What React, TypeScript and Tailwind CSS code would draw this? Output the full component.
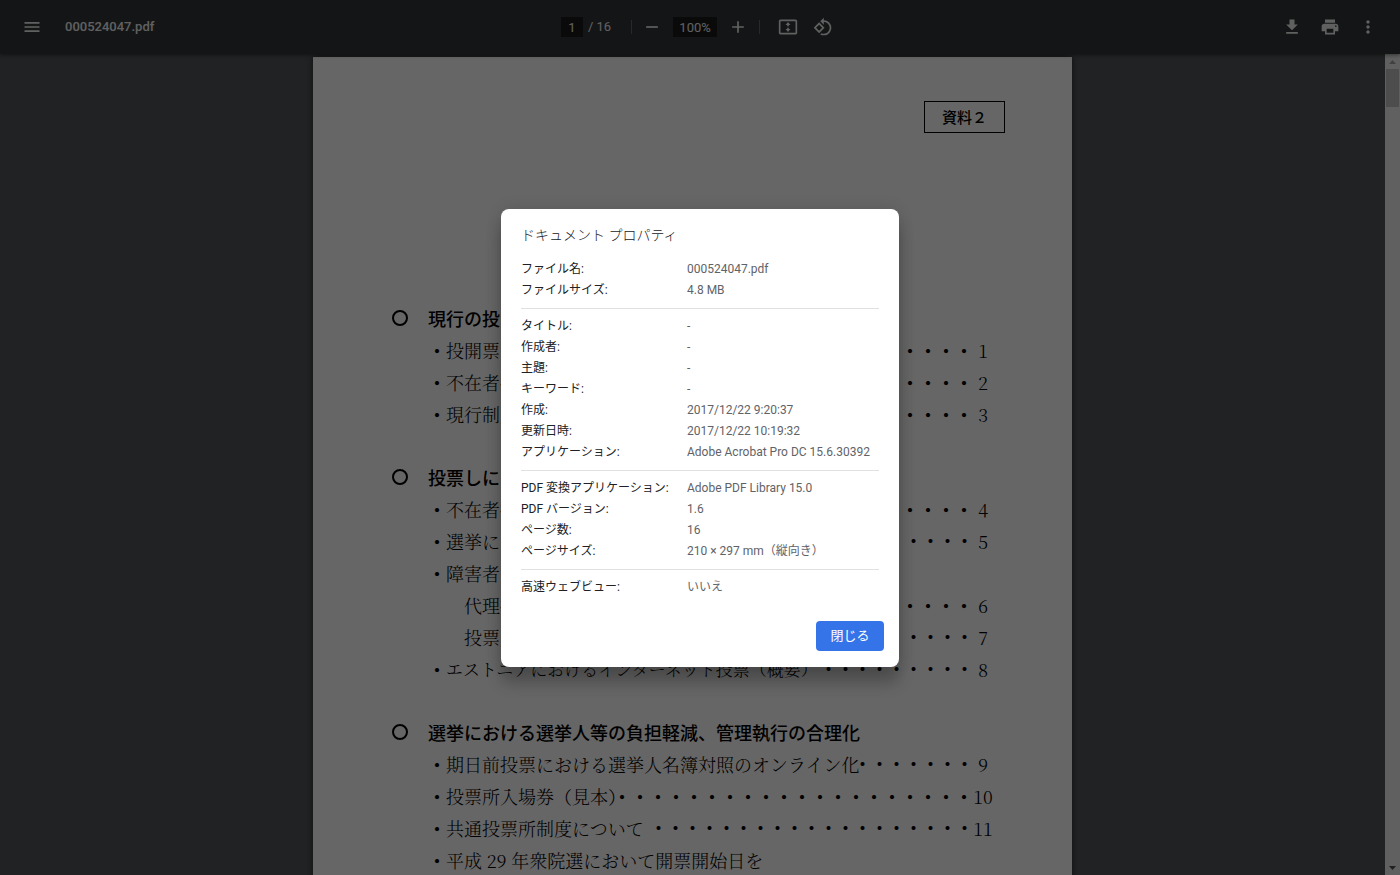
import type { ReactNode } from "react";

type Line = {
  text: string;
  dots?: number;
  page?: string;
  sub?: boolean;
  textClass?: string;
  dotsClass?: string;
};

type Section = { title: string; lines: Line[] };

const sections: Section[] = [
  {
    title: "現行の投開票制度",
    lines: [
      { text: "投開票の流れ", dots: 5, page: "1" },
      { text: "不在者投票の概要", dots: 5, page: "2" },
      { text: "現行制度の課題", dots: 5, page: "3" },
    ],
  },
  {
    title: "投票しにくい環境の改善",
    lines: [
      { text: "不在者投票の手続", dots: 5, page: "4" },
      { text: "選挙における投票", dots: 5, page: "5", dotsClass: "text-[17px]" },
      { text: "障害者等の投票" },
      { text: "代理投票", dots: 5, page: "6", sub: true },
      { text: "投票所の設備", dots: 5, page: "7", sub: true, dotsClass: "text-[17px]" },
      {
        text: "エストニアにおけるインターネット投票（概要）",
        dots: 9,
        page: "8",
        textClass: "text-[17px]",
        dotsClass: "text-[17px]",
      },
    ],
  },
  {
    title: "選挙における選挙人等の負担軽減、管理執行の合理化",
    lines: [
      { text: "期日前投票における選挙人名簿対照のオンライン化", dots: 7, page: "9", dotsClass: "text-[17px]" },
      { text: "投票所入場券（見本）", dots: 20, page: "10" },
      { text: "共通投票所制度について", dots: 19, page: "11", dotsClass: "text-[17px]" },
      { text: "平成 29 年衆院選において開票開始日を" },
    ],
  },
];

const properties: [string, string][][] = [
  [
    ["ファイル名:", "000524047.pdf"],
    ["ファイルサイズ:", "4.8 MB"],
  ],
  [
    ["タイトル:", "-"],
    ["作成者:", "-"],
    ["主題:", "-"],
    ["キーワード:", "-"],
    ["作成:", "2017/12/22 9:20:37"],
    ["更新日時:", "2017/12/22 10:19:32"],
    ["アプリケーション:", "Adobe Acrobat Pro DC 15.6.30392"],
  ],
  [
    ["PDF 変換アプリケーション:", "Adobe PDF Library 15.0"],
    ["PDF バージョン:", "1.6"],
    ["ページ数:", "16"],
    ["ページサイズ:", "210 × 297 mm（縦向き）"],
  ],
  [["高速ウェブビュー:", "いいえ"]],
];

function IconButton({ label, children }: { label: string; children: ReactNode }) {
  return (
    <button type="button" aria-label={label} className="flex size-6 shrink-0 items-center justify-center">
      <svg viewBox="0 0 24 24" className="size-5 fill-current">
        {children}
      </svg>
    </button>
  );
}

function Toolbar() {
  return (
    <header className="relative z-10 grid h-[54px] shrink-0 grid-cols-[1fr_auto_1fr] items-center bg-[#323639] px-5 text-[13px] text-[#f1f1f1] shadow-[0_1px_4px_rgba(0,0,0,0.5)]">
      <div className="flex items-center gap-[21px]">
        <IconButton label="メニュー">
          <path d="M3 18h18v-2H3v2zm0-5h18v-2H3v2zm0-7v2h18V6H3z" />
        </IconButton>
        <span className="font-medium">000524047.pdf</span>
      </div>

      <div className="mr-1 flex items-center">
        <input
          aria-label="ページ番号"
          defaultValue="1"
          className="h-5 w-[22px] bg-[#191b1c] text-center"
        />
        <span className="ml-[5px]">/ 16</span>
        <span className="ml-5 h-[14px] w-px bg-white/25" />
        <span className="ml-2 flex items-center gap-[9px]">
          <IconButton label="縮小">
            <path d="M19 13H5v-2h14v2z" />
          </IconButton>
          <input
            aria-label="ズーム"
            defaultValue="100%"
            className="h-5 w-11 bg-[#191b1c] text-center"
          />
          <IconButton label="拡大">
            <path d="M19 13h-6v6h-2v-6H5v-2h6V5h2v6h6v2z" />
          </IconButton>
        </span>
        <span className="ml-[9px] h-[14px] w-px bg-white/25" />
        <span className="ml-4 flex items-center gap-[11px]">
          <IconButton label="ページに合わせる">
            <path d="M21 3H3c-1.1 0-2 .9-2 2v14c0 1.1.9 2 2 2h18c1.1 0 2-.9 2-2V5c0-1.1-.9-2-2-2zm0 16H3V5h18v14z" />
            <path d="M12 6l3 3.600h-2v1.400h-2V9.600H9zM12 18l-3-3.600h2V13h2v1.400h2z" />
          </IconButton>
          <IconButton label="左に回転">
            <path d="M7.34 6.41L.86 12.9l6.49 6.48 6.49-6.48-6.5-6.49zM3.69 12.9l3.66-3.66L11 12.9l-3.66 3.66-3.65-3.66zm15.67-6.26C17.61 4.88 15.3 4 13 4V.76L8.76 5 13 9.24V6c1.79 0 3.58.68 4.95 2.05 2.73 2.73 2.73 7.17 0 9.9C16.58 19.32 14.79 20 13 20c-.97 0-1.94-.21-2.84-.61l-1.49 1.49C10.02 21.62 11.51 22 13 22c2.3 0 4.61-.88 6.36-2.64 3.52-3.51 3.52-9.21 0-12.72z" />
          </IconButton>
        </span>
      </div>

      <div className="flex items-center justify-end gap-[14px]">
        <IconButton label="ダウンロード">
          <path d="M19 9h-4V3H9v6H5l7 7 7-7zM5 18v2h14v-2H5z" />
        </IconButton>
        <IconButton label="印刷">
          <path d="M19 8H5c-1.66 0-3 1.34-3 3v6h4v4h12v-4h4v-6c0-1.66-1.34-3-3-3zm-3 11H8v-5h8v5zm3-7c-.55 0-1-.45-1-1s.45-1 1-1 1 .45 1 1-.45 1-1 1zm-1-9H6v4h12V3z" />
        </IconButton>
        <IconButton label="その他">
          <path d="M12 8c1.100 0 2-.9 2-2s-.9-2-2-2-2 .9-2 2 .9 2 2 2zm0 2c-1.100 0-2 .9-2 2s.9 2 2 2 2-.9 2-2-.9-2-2-2zm0 6c-1.100 0-2 .9-2 2s.9 2 2 2 2-.9 2-2-.9-2-2-2z" />
        </IconButton>
      </div>
    </header>
  );
}

function ContentsLine({ line }: { line: Line }) {
  return (
    <li className={line.sub ? "flex h-8 items-center pl-9" : "flex h-8 items-center"}>
      {!line.sub && <span className="font-['Noto_Sans_CJK_JP',sans-serif] font-medium">・</span>}
      <span className={line.textClass}>{line.text}</span>
      {line.page && (
        <>
          <span
            className={`flex min-w-0 flex-1 justify-end font-['Noto_Sans_CJK_JP',sans-serif] font-medium ${line.dotsClass ?? ""}`}
          >
            {"・".repeat(line.dots ?? 0)}
          </span>
          <span className="w-5 shrink-0 text-center">{line.page}</span>
        </>
      )}
    </li>
  );
}

function DocumentPage() {
  return (
    <article className="mx-auto mt-[3px] h-[1080px] w-full max-w-[759px] bg-white text-black shadow-[0_0_6px_rgba(0,0,0,0.6)]">
      <div className="flex justify-end pt-11 pr-[67px]">
        <p className="flex h-8 items-center border border-black px-[17px] font-['Noto_Sans_CJK_JP',sans-serif] text-[15px] font-medium">
          資料２
        </p>
      </div>
      <div className="mt-[169px] flex flex-col gap-[31px] px-[79px] font-['Noto_Serif_CJK_JP','Liberation_Serif','Noto_Sans_CJK_JP',serif] text-[18px] font-light whitespace-nowrap">
        {sections.map((section) => (
          <section key={section.title}>
            <h2 className="flex h-8 items-center gap-5 font-['Noto_Sans_CJK_JP',sans-serif] font-medium">
              <span className="size-4 rounded-full border-2 border-black" />
              {section.title}
            </h2>
            <ul className="pl-9">
              {section.lines.map((line) => (
                <ContentsLine key={line.text} line={line} />
              ))}
            </ul>
          </section>
        ))}
      </div>
    </article>
  );
}

function Scrollbar() {
  return (
    <div className="flex w-[15px] shrink-0 flex-col items-center bg-[#f1f1f1]">
      <svg viewBox="0 0 15 15" className="size-[15px] fill-[#a3a3a3]">
        <path d="M4 10h7L7.500 6z" />
      </svg>
      <div className="h-[38px] w-[13px] bg-[#c1c1c1]" />
      <svg viewBox="0 0 15 15" className="mt-auto size-[15px] fill-[#505050]">
        <path d="M4 6h7l-3.500 4z" />
      </svg>
    </div>
  );
}

function PropertiesDialog() {
  return (
    <div
      role="dialog"
      aria-labelledby="dialog-title"
      className="w-[398px] rounded-lg bg-white pt-[14px] pb-4 shadow-[0_0_16px_rgba(0,0,0,0.12),0_16px_16px_rgba(0,0,0,0.24)]"
    >
      <h1 id="dialog-title" className="px-5 text-[14px] leading-6 font-light text-[#202124]">
        ドキュメント プロパティ
      </h1>
      <div className="mx-5 mt-3 divide-y divide-[#e0e0e0] text-[12px]">
        {properties.map((group) => (
          <dl key={group[0][0]} className="py-[7px] first:pt-0 last:pb-0">
            {group.map(([name, value]) => (
              <div key={name} className="grid grid-cols-[166px_1fr] items-baseline leading-[21px] whitespace-nowrap">
                <dt className="text-[#202124]">{name}</dt>
                <dd className="text-[#5f6368]">{value}</dd>
              </div>
            ))}
          </dl>
        ))}
      </div>
      <div className="mt-[23px] flex justify-end pr-[15px]">
        <button type="button" className="h-[30px] w-[68px] rounded-[4px] bg-[#3474e8] text-[13px] text-white">
          閉じる
        </button>
      </div>
    </div>
  );
}

export default function App() {
  return (
    <div className="relative flex h-screen flex-col overflow-hidden bg-[#525659] font-[Roboto,'Noto_Sans_CJK_JP',sans-serif]">
      <Toolbar />
      <main className="flex min-h-0 flex-1">
        <div className="min-w-0 flex-1 overflow-hidden">
          <DocumentPage />
        </div>
        <Scrollbar />
      </main>

      {/* Modal backdrop */}
      <div className="absolute inset-0 z-20 flex items-center justify-center bg-black/60">
        <PropertiesDialog />
      </div>
    </div>
  );
}
